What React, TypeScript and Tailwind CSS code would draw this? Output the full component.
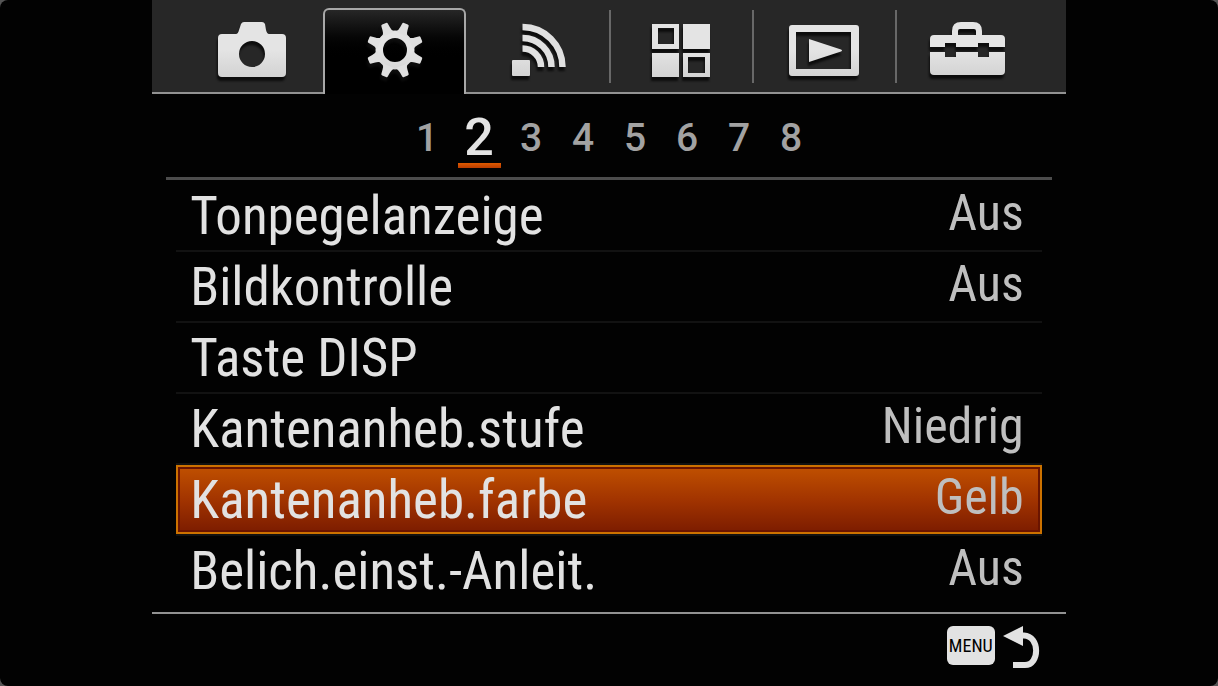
import React, { useState } from "react";
import clsx from "clsx";

const TEETH = [22.5, 67.5, 112.5, 157.5, 202.5, 247.5, 292.5, 337.5];

const Gradient = ({ id }: { id: string }) => (
  <defs>
    <linearGradient id={id} x1="0" y1="0" x2="0" y2="64" gradientUnits="userSpaceOnUse">
      <stop offset="0.5" stopColor="#e4e4e4" />
      <stop offset="1" stopColor="#cfcfcf" />
    </linearGradient>
  </defs>
);

const TabIcon = ({ id, children }: { id: string; children: React.ReactNode }) => (
  <svg
    viewBox="0 0 80 64"
    fill={`url(#${id})`}
    aria-hidden="true"
    className="h-16 w-20 overflow-visible drop-shadow-[-1px_4px_1px_#0c0c0c]"
  >
    <Gradient id={id} />
    {children}
  </svg>
);

const CameraIcon = () => (
  <TabIcon id="camera">
    <path
      fillRule="evenodd"
      d="M10 16H24Q26 16 27 12L29 6Q30 4 32 4H50Q52 4 53 6L54 12Q55 16 57 16H70Q74 16 74 20V55Q74 59 70 59H10Q6 59 6 55V20Q6 16 10 16ZM40 23a13 13 0 1 0 0 26a13 13 0 1 0 0-26Z"
    />
  </TabIcon>
);

const GearIcon = () => (
  <TabIcon id="gear">
    <path
      fillRule="evenodd"
      d="M40 12.500a19.500 19.500 0 1 0 0 39a19.500 19.500 0 1 0 0-39ZM40 20a12 12 0 1 1 0 24a12 12 0 1 1 0-24Z"
    />
    {TEETH.map((angle) => (
      <path
        key={angle}
        d="M33.500 15Q36 12 36 9L36.500 5Q36.500 3.500 38 3.500H42Q43.500 3.500 43.500 5L44 9Q44 12 46.500 15Z"
        fill="#e0e0e0"
        transform={`rotate(${angle} 40 32)`}
      />
    ))}
  </TabIcon>
);

const WirelessIcon = () => (
  <TabIcon id="wireless">
    <rect x="14" y="42" width="18" height="16" rx="1" />
    <g fill="none" stroke="#e0e0e0" strokeWidth="6.500">
      <path d="M24.500 9a40 40 0 0 1 40 40" />
      <path d="M24.500 20a29 29 0 0 1 29 29" />
      <path d="M24.500 30.500a18.500 18.500 0 0 1 18.500 18.500" />
    </g>
  </TabIcon>
);

const AppsIcon = () => (
  <TabIcon id="apps">
    <path
      fillRule="evenodd"
      d="M11 6H38V31H11ZM17 10V26H33V10ZM42 6H69V31H42ZM11 35H38V59H11ZM42 35H69V59H42ZM47 39V55H64V39Z"
    />
  </TabIcon>
);

const PlaybackIcon = () => (
  <TabIcon id="playback">
    <path
      fillRule="evenodd"
      d="M8 7H72Q75 7 75 10V55Q75 58 72 58H8Q5 58 5 55V10Q5 7 8 7ZM12 14V51H67V14Z"
    />
    <path d="M25 21L57 31.500Q59 32.500 57 33.500L25 44Z" />
  </TabIcon>
);

const ToolboxIcon = () => (
  <TabIcon id="toolbox">
    <path d="M25 18V13Q25 4 34 4H46Q55 4 55 13V18H49V13Q49 11 47 11H33Q31 11 31 13V18Z" />
    <path d="M7 17H74Q78 17 78 21V29H62V25H51V29H29V25H18V29H3V21Q3 17 7 17Z" />
    <path d="M3 34H18V39H29V34H51V39H62V34H78V53Q78 57 74 57H7Q3 57 3 53Z" />
  </TabIcon>
);

const TABS = [
  { name: "Kamera", icon: <CameraIcon />, divider: false },
  { name: "Benutzereinstellungen", icon: <GearIcon />, divider: false },
  { name: "Drahtlos", icon: <WirelessIcon />, divider: false },
  { name: "Applikation", icon: <AppsIcon />, divider: true },
  { name: "Wiedergabe", icon: <PlaybackIcon />, divider: true },
  { name: "Einstellung", icon: <ToolboxIcon />, divider: true },
];

const PAGES = [1, 2, 3, 4, 5, 6, 7, 8];

const ITEMS = [
  { label: "Tonpegelanzeige", value: "Aus" },
  { label: "Bildkontrolle", value: "Aus" },
  { label: "Taste DISP", value: "" },
  { label: "Kantenanheb.stufe", value: "Niedrig" },
  { label: "Kantenanheb.farbe", value: "Gelb" },
  { label: "Belich.einst.-Anleit.", value: "Aus" },
];

const Tabs = () => {
  const [tab, setTab] = useState(1);

  return (
    <header className="flex h-[94px] bg-[#272727]">
      <span className="w-7 border-b-2 border-[#929292]" />
      <div className="grid flex-1 grid-cols-6">
        {TABS.map(({ name, icon, divider }, i) => (
          <button
            key={name}
            type="button"
            aria-label={name}
            onClick={() => setTab(i)}
            className={clsx(
              "flex items-start",
              i === tab
                ? "mt-2 rounded-t-md border-x-2 border-t-2 border-[#a8a8a8] bg-linear-to-b from-[#272727] to-black to-60% pt-2"
                : "border-b-2 border-[#929292] pt-[10px]"
            )}
          >
            {divider && <span className="h-[73px] w-[2px] bg-[#686868]" />}
            <span className={clsx("flex flex-1 justify-center", i !== tab && "pt-2")}>{icon}</span>
          </button>
        ))}
      </div>
      <span className="w-7 border-b-2 border-[#929292]" />
    </header>
  );
};

const Pagination = () => {
  const [page, setPage] = useState(2);

  return (
    <nav className="mx-[14px] flex h-[86px] justify-center border-b-3 border-[#4c4c4c] font-['Roboto',sans-serif]">
      {PAGES.map((n) => (
        <button
          key={n}
          type="button"
          onClick={() => setPage(n)}
          className={clsx(
            "flex w-[52px] flex-col items-center",
            n === page ? "pt-[18px] text-[52px] text-[#e4e4e4]" : "pt-[18px] text-[39px] text-[#a2a2a2]"
          )}
        >
          <span className="h-[51px] leading-[52px] font-medium">{n}</span>
          {n === page && <span className="h-[5px] w-[43px] bg-linear-to-b from-[#e05a00] to-[#b83c00]" />}
        </button>
      ))}
    </nav>
  );
};

const MenuList = () => {
  const [selected, setSelected] = useState(4);

  return (
    <ul className="flex-1 px-6 pt-px">
      {ITEMS.map(({ label, value }, i) => (
        <li
          key={label}
          className={clsx("h-[71px]", i < ITEMS.length - 1 && "border-b-2 border-[#121212]")}
        >
          <button
            type="button"
            onClick={() => setSelected(i)}
            className={clsx(
              "flex h-[69px] w-full items-start justify-between border-2 pr-4 pl-3",
              i === selected
                ? "border-[#cc7200] bg-linear-to-b from-[#c05000] via-[#a23400] to-[#7c1c00] inset-ring-2 inset-ring-[#6a1400]"
                : "border-transparent"
            )}
          >
            <span className="text-[53px] leading-[66px] text-[#e2e2e2]">{label}</span>
            <span className="text-[50px] leading-[60px] text-[#bfbfbf]">{value}</span>
          </button>
        </li>
      ))}
    </ul>
  );
};

const App = () => {
  return (
    <div className="min-h-screen bg-[#555555]">
      <main className="flex min-h-screen justify-center rounded-lg bg-[#020202] font-['Roboto_Condensed','Liberation_Sans_Narrow','Liberation_Sans',sans-serif]">
        <div className="flex w-3/4 flex-col">
          <Tabs />
          <Pagination />
          <MenuList />
          <footer className="flex h-[74px] items-start justify-end gap-2 border-t-2 border-[#929292] pt-3 pr-[25px]">
            <button
              type="button"
              className="flex h-[39px] w-12 items-center justify-center rounded-md bg-[#e2e2e2] text-lg text-black"
            >
              MENU
            </button>
            <button type="button" aria-label="Zurück">
              <svg viewBox="0 0 38 44" className="h-11 w-[38px]" aria-hidden="true">
                <path d="M0 10L20 0V20Z" fill="#e2e2e2" />
                <path d="M18 9.500H21C37 10 37 39 22 39H10" fill="none" stroke="#e2e2e2" strokeWidth="6" />
              </svg>
            </button>
          </footer>
        </div>
      </main>
    </div>
  );
};

export default App;
